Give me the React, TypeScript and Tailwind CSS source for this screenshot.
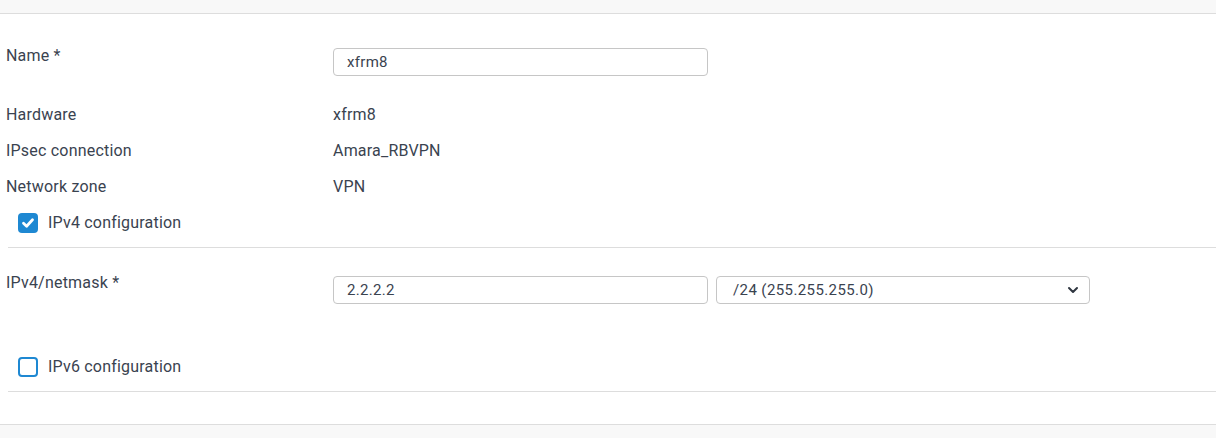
import React from 'react';

const font = { fontFamily: '"Roboto", "Open Sans", sans-serif' };

const Check: React.FC<{ checked?: boolean; label: string }> = ({ checked, label }) => (
  <div className="flex items-center h-[35px] pl-[18px] gap-[10px]">
    {checked ? (
      <span className="w-[20px] h-[20px] rounded-[4px] bg-[#1e88d2] flex items-center justify-center">
        <svg width="14" height="14" viewBox="0 0 14 14" fill="none">
          <path d="M2.5 7.3 L5.6 10.2 L11.5 3.8" stroke="white" strokeWidth="2.8" strokeLinecap="round" strokeLinejoin="round" />
        </svg>
      </span>
    ) : (
      <span className="w-[20px] h-[20px] rounded-[4px] border-2 border-[#1e88d2] bg-white" />
    )}
    <span className="text-[16px] tracking-[0.2px] text-[#3a4350]">{label}</span>
  </div>
);

const StaticRow: React.FC<{ label: string; value: string }> = ({ label, value }) => (
  <div className="grid grid-cols-[327px_1fr] h-[36px] items-center pl-[6px] text-[16px] tracking-[0.2px] text-[#3a4350]">
    <span>{label}</span>
    <span>{value}</span>
  </div>
);

export default function App() {
  return (
    <div className="w-[1216px] h-[438px] bg-white overflow-hidden" style={font}>
      <div className="h-[14px] bg-[#f8f8f8] border-b border-[#dddddd]" />

      <div className="pt-[34px]">
        <div className="grid grid-cols-[327px_1fr] pl-[6px] text-[16px] tracking-[0.2px] text-[#3a4350]">
          <span className="leading-[16px]">Name *</span>
          <input
            readOnly
            value="xfrm8"
            className="w-[375px] h-[28px] border border-[#c6c6c6] rounded-[4px] px-[13px] text-[15px] tracking-[0.3px] text-[#3a4350] outline-none"
          />
        </div>

        <div className="mt-[21px]">
          <StaticRow label="Hardware" value="xfrm8" />
          <StaticRow label="IPsec connection" value="Amara_RBVPN" />
          <StaticRow label="Network zone" value="VPN" />
        </div>

        <Check checked label="IPv4 configuration" />
        <div className="ml-[8px] mt-[7px] border-t border-[#dddddd]" />

        <div className="grid grid-cols-[327px_1fr] pl-[6px] pt-[28px] text-[16px] tracking-[0.2px] text-[#3a4350]">
          <span className="leading-[16px] -mt-[1px]">IPv4/netmask *</span>
          <div className="flex gap-[8px]">
            <input
              readOnly
              value="2.2.2.2"
              className="w-[375px] h-[28px] border border-[#c6c6c6] rounded-[4px] px-[13px] text-[15px] tracking-[0.3px] text-[#3a4350] outline-none"
            />
            <div className="w-[374px] h-[28px] border border-[#c6c6c6] rounded-[4px] pl-[16px] pr-[9px] flex items-center justify-between text-[15px] tracking-[0.4px] text-[#3a4350]">
              <span>/24 (255.255.255.0)</span>
              <svg width="14" height="14" viewBox="0 0 14 14" fill="none">
                <path d="M3 5 L7 9 L11 5" stroke="#2f3640" strokeWidth="2" strokeLinecap="round" strokeLinejoin="round" />
              </svg>
            </div>
          </div>
        </div>

        <div className="mt-[45px]">
          <Check label="IPv6 configuration" />
        </div>
        <div className="ml-[8px] mt-[7px] border-t border-[#dddddd]" />
      </div>

      <div className="mt-[32px] h-[20px] bg-[#f8f8f8] border-t border-[#dddddd]" />
    </div>
  );
}
